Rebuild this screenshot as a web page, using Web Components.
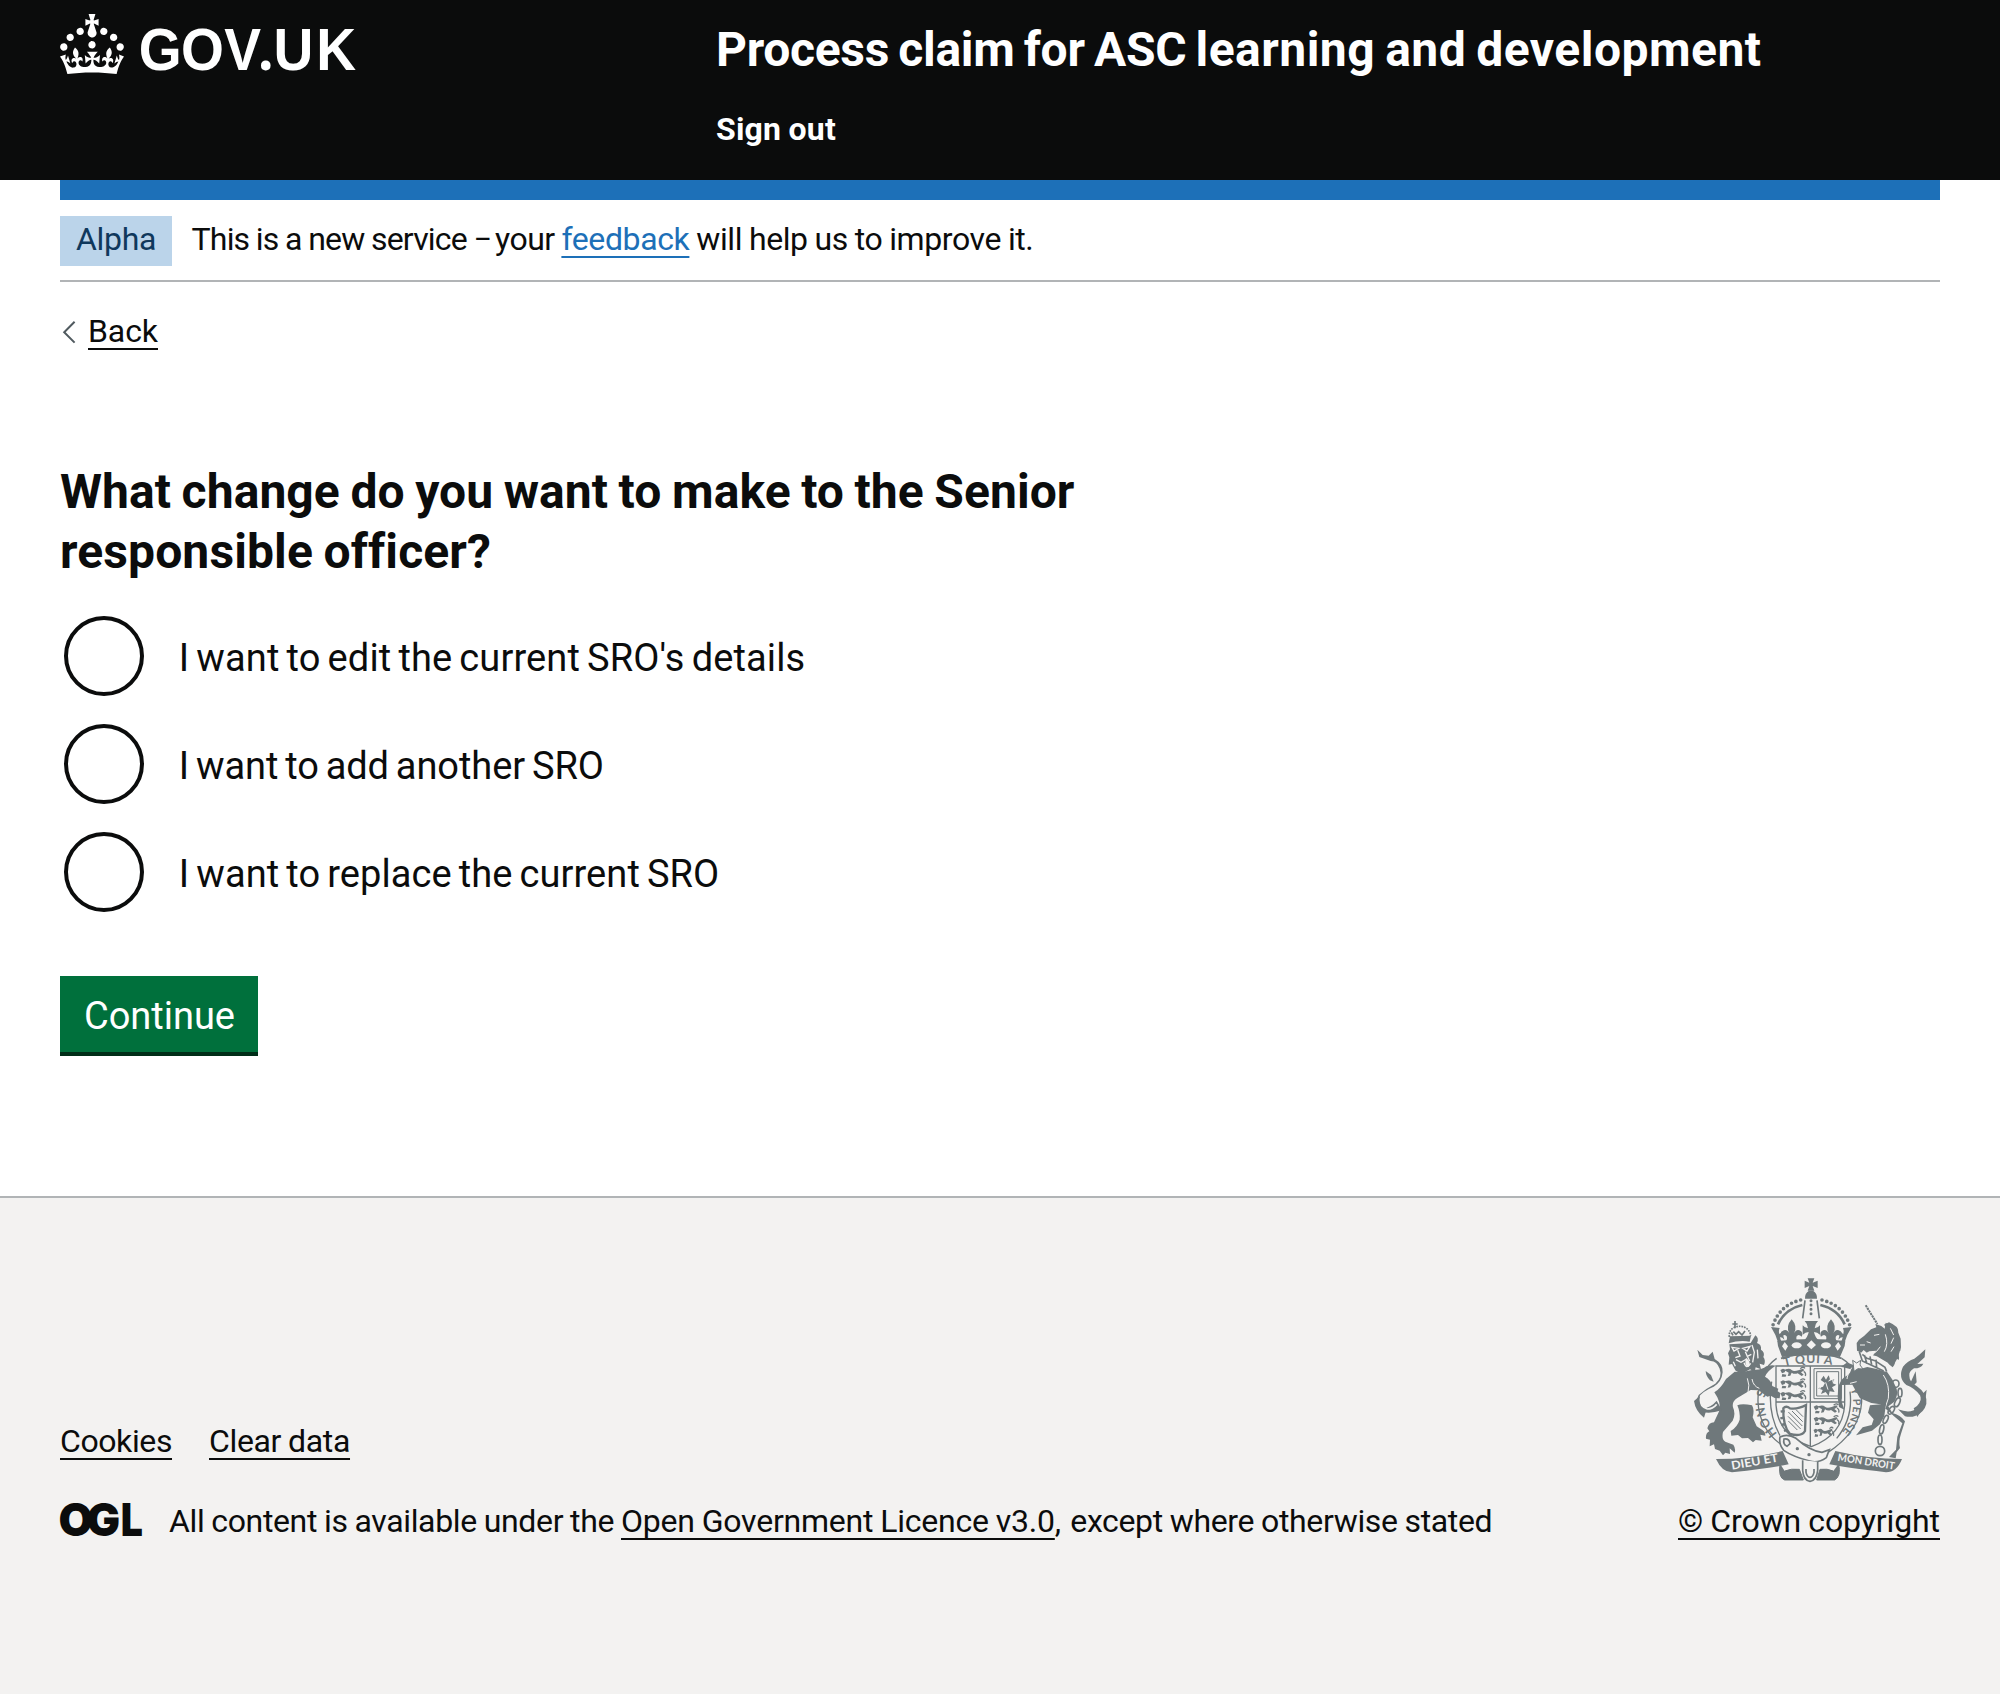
<!DOCTYPE html>
<html lang="en">
<head>
<meta charset="utf-8">
<title>What change do you want to make to the Senior responsible officer?</title>
<style>
  html, body { margin: 0; padding: 0; }
  body { background: #f3f2f1; color: #0b0c0c; font-family: Roboto, "Liberation Sans", sans-serif; font-size: 32px; line-height: 40px; }
</style>
</head>
<body>
<claim-page></claim-page>

<script>
const define = (name, html, extra) => {
  const template = document.createElement('template');
  template.innerHTML = html.trim();
  customElements.define(name, class extends HTMLElement {
    constructor() {
      super();
      this.attachShadow({ mode: 'open' }).append(template.content.cloneNode(true));
    }
    connectedCallback() { if (extra) extra(this); }
  });
};

/* A run of text tracked to a set advance width. */
define('text-run', `<style>
    :host { display: inline-block; white-space: pre; font-kerning: normal; word-spacing: var(--word-gap, -.02em); }
    :host([link]) span { text-decoration: underline; text-decoration-thickness: 2px; text-underline-offset: 6px; text-decoration-skip-ink: none; }
  </style><span><slot></slot></span>`,
  el => {
    const wanted = parseFloat(el.getAttribute('width'));
    if (!wanted) return;
    el.style.letterSpacing = '0px';
    el.style.fontVariantLigatures = 'none';
    const natural = el.getBoundingClientRect().width;
    el.style.letterSpacing = ((wanted - natural) / el.textContent.length) + 'px';
  });

define('govuk-logo', `
  <style>:host { display: block; } svg { display: block; overflow: visible; }</style>
  <svg width="300" height="64" viewBox="0 0 300 64" fill="#fff" role="img" aria-label="GOV.UK">
    <g transform="scale(2)"><path d="M22.6 10.4c-1 .4-2-.1-2.4-1-.4-.9.1-2 1-2.4.9-.4 2 .1 2.4 1s-.1 2-1 2.4m-5.9 6.7c-.9.4-2-.1-2.4-1-.4-.9.1-2 1-2.4.9-.4 2 .1 2.4 1s-.1 2-1 2.4m10.8-3.7c-1 .4-2-.1-2.4-1-.4-.9.1-2 1-2.4.9-.4 2 .1 2.4 1s0 2-1 2.4m3.3 4.8c-1 .4-2-.1-2.4-1-.4-.9.1-2 1-2.4.9-.4 2 .1 2.4 1s-.1 2-1 2.4M17 4.7l2.3 1.2V2.5l-2.3.7-.2-.2.9-3h-3.4l.9 3-.2.2c-.1.1-2.3-.7-2.3-.7v3.4L15 4.7c.1.1.1.2.2.2l-1.3 4c-.1.2-.1.4-.1.6 0 1.1.8 2 1.9 2.2h.7c1-.2 1.9-1.1 1.9-2.1 0-.2 0-.4-.1-.6l-1.3-4c-.1-.2 0-.2.1-.3m-7.6 5.7c.9.4 2-.1 2.4-1 .4-.9-.1-2-1-2.4-.9-.4-2 .1-2.4 1s0 2 1 2.4m-5 3c.9.4 2-.1 2.4-1 .4-.9-.1-2-1-2.4-.9-.4-2 .1-2.4 1s.1 2 1 2.4m-3.2 4.8c.9.4 2-.1 2.4-1 .4-.9-.1-2-1-2.4-.9-.4-2 .1-2.4 1s0 2 1 2.4m14.8 11c4.4 0 8.6.3 12.3.8 1.1-4.5 2.4-7 3.7-8.8l-2.5-.9c.2 1.3.3 1.9 0 2.7-.4-.4-.8-1.1-1.1-2.3l-1.2 4c.7-.5 1.3-.8 2-.9-1.1 2.5-2.6 3.1-3.5 3-1.1-.2-1.7-1.2-1.5-2.1.3-1.2 1.5-1.5 2.1-.1 1.1-2.3-.8-3-2-2.3 1.9-1.9 2.1-3.5.6-5.6-2.1 1.6-2.1 3.2-1.2 5.5-1.2-1.4-3.2-.6-2.5 1.6.9-1.4 2.1-.5 1.9.8-.2 1.1-1.7 2.1-3.5 1.9-2.7-.2-2.9-2.1-2.9-3.6.7-.1 1.9.5 2.9 1.9l.4-4.3c-1.1 1.1-2.1 1.4-3.2 1.4.4-1.2 2.1-3 2.1-3h-5.4s1.7 1.9 2.1 3c-1.1 0-2.1-.2-3.2-1.4l.4 4.3c1-1.4 2.2-2 2.9-1.9-.1 1.5-.2 3.4-2.9 3.6-1.9.2-3.4-.8-3.5-1.9-.2-1.3 1-2.2 1.9-.8.7-2.3-1.2-3-2.5-1.6.9-2.2.9-3.9-1.2-5.5-1.5 2-1.3 3.7.6 5.6-1.2-.7-3.1 0-2 2.3.6-1.4 1.8-1.1 2.1.1.2.9-.3 1.9-1.5 2.1-.9.2-2.4-.5-3.5-3 .6 0 1.2.3 2 .9l-1.2-4c-.3 1.1-.7 1.9-1.1 2.3-.3-.8-.2-1.4 0-2.7l-2.9.9C1.3 23 2.6 25.5 3.7 30c3.7-.5 7.9-.8 12.3-.8"/></g>
    <text transform="scale(.92 1)" y="55.6" x="85.6 131.6 178.6 215.2 232 278.6" font-family="Liberation Sans" font-weight="700" font-size="60">GOV<tspan font-family="Noto Sans">.</tspan>UK</text>
  </svg>`);

define('ogl-logo', `
  <style>:host { display: block; width: 82px; height: 34px; } svg { display: block; overflow: visible; }</style>
  <svg width="82" height="34" viewBox="0 0 82 34" fill="#0b0c0c" font-family="Inter" font-weight="900" font-size="45.5">
    <text y="33.8" x="-1.6 27" transform="scale(.98 1)">OG</text><text y="33.8" x="70.6" transform="scale(.86 1)">L</text>
  </svg>`);

define('site-header', `
  <style>
    :host { display: block; background: #0b0c0c; color: #fff; height: 180px; padding: 0 60px; font-weight: 700; }
    .row { display: flex; }
    govuk-logo { width: 656px; padding-top: 14px; }
    .service { display: flex; flex-direction: column; padding-top: 20px; gap: 29px; }
    .name { font-size: 48px; line-height: 60px; --word-gap: -.05em; }
  </style>
  <div class="row"><govuk-logo></govuk-logo>
    <div class="service">
      <div class="name"><text-run width="479.5">Process claim for ASC </text-run><text-run width="566">learning and development</text-run></div>
      <div><text-run width="120">Sign out</text-run></div>
    </div>
  </div>`);

define('phase-banner', `
  <style>
    :host { display: block; margin: 0 60px; border-top: 20px solid #1d70b8; border-bottom: 2px solid #b1b4b6; }
    .row { display: flex; align-items: center; height: 50px; padding: 16px 0 14px; gap: 19.5px; }
    .tag { background: #bbd4ea; color: #0f385c; padding: 3px 16px 7px; width: 80px; }
    .msg { padding-bottom: 4px; white-space: nowrap; display: flex; }
    .blue { color: #1d70b8; }
    .dash { width: 21.5px; transform: scaleX(.85); transform-origin: left; }
  </style>
  <div class="row"><div class="tag"><text-run width="80">Alpha</text-run></div>
  <div class="msg"><text-run width="282">This is a new service </text-run><text-run class="dash">– </text-run><text-run width="66.4">your </text-run><text-run class="blue" link width="128">feedback</text-run><text-run width="344"> will help us to improve it.</text-run></div></div>`);

define('back-link', `
  <style>:host { display: flex; } svg { display: block; margin-right: 10px; }</style>
  <svg width="18" height="40" viewBox="0 0 18 40"><path d="M14.6 10.8 4.2 21.2 14.6 31.6" fill="none" stroke="#505a5f" stroke-width="2"/></svg><text-run link width="70">Back</text-run>`);

define('radio-option', `
  <style>
    :host { display: flex; gap: 34.8px; height: 80px; font-size: 38px; line-height: 50px; --word-gap: -.065em; }
    .dot { width: 72px; height: 72px; border: 4px solid #0b0c0c; border-radius: 50%; background: #fff; }
    .label { padding-top: 17px; }
  </style><div class="dot"></div><div class="label"><slot></slot></div>`);

define('continue-button', `
  <style>
    :host { display: block; width: 174px; height: 61px; padding: 15px 0 0 24px; background: #00703c; color: #fff; border-bottom: 4px solid #002d18; font-size: 38px; line-height: 50px; }
  </style><text-run width="151">Continue</text-run>`);

define('royal-arms', `
  <style>:host { display: block; width: 262px; height: 206px; } svg { display: block; }</style>
  <svg width="262" height="206" viewBox="24 36 786 618" fill="#6f787b" stroke="none">
    <defs>
      <path id="garterL" d="M322 506C262 440 262 340 392 297"/>
      <path id="garterT" d="M336 308Q425 280 520 308"/>
      <path id="garterR" d="M541 372C566 440 540 510 430 556"/>
      <g id="passant">
        <path d="M2 8l8-4 8 3-3 8-8 3z M18 6q12-4 18 2t20 1l14-5 4 5-10 6 8 7-6 4-12-8q-10 4-18-2l-4 9-8 1 3-10-10-6z M8 20l12 2-2 6-12 0z"/>
        <path d="M62 4q8-8 14-1M72 12q8 4 5 14" fill="none" stroke="#6f787b" stroke-width="4"/>
      </g>
      <path id="fleur" d="M0-34q17 19 6 38 5-12 15-9 11 5 6 18-9-10-14-1-3 10 8 18h-42q11-8 8-18-5-9-14 1-5-13 6-18 10-3 15 9-11-19 6-38z"/>
      <path id="halfcross" d="M303 186l26 3q-4 10-1 18 5-2 8-9l7 26q-7-8-13-7 0 8 9 18h-14q-8-28-22-49z"/>
    </defs>

    <!-- crown -->
    <path d="M413 40h20l-5 13 15-6v22l-15-6 5 14h-20l5-14-14 6V47l14 6z"/>
    <path d="M417 77h12q13 8 12 24h-36q-1-16 12-24z"/>
    <path d="M405 106l-7 54M441 106l7 54" fill="none" stroke="#6f787b" stroke-width="5"/>
    <path d="M423 107v52" fill="none" stroke="#6f787b" stroke-width="9" stroke-linecap="round" stroke-dasharray="0 13"/>
    <path d="M392 105Q330 120 309 180M456 105Q518 120 539 180" fill="none" stroke="#6f787b" stroke-width="11" stroke-linecap="round" stroke-dasharray="0 14.5"/>
    <path d="M397 120Q345 132 324 178M451 120Q503 132 524 178" fill="none" stroke="#6f787b" stroke-width="8"/>
    <path d="M404 168h40q-10 10-10 22 10-1 16-9v28q-8-8-18-8 2 14 16 28h-48q14-14 16-28-10 0-18 8v-28q6 8 16 9 0-12-10-22z"/>
    <use href="#fleur" transform="translate(365 201) scale(1.12)"/><use href="#fleur" transform="translate(483 201) scale(-1.12 1.12)"/>
    <use href="#halfcross"/><use href="#halfcross" transform="translate(848 0) scale(-1 1)"/>
    <path d="M322 228q102-12 204 0l-2 15-14 33q-86-11-174 0l-12-33z"/>
    <g fill="#f3f2f1"><path d="M424 226l14 14-14 13-14-13zM344 231l10 13-8 13-10-13zM505 231l-10 13 8 13 10-13z"/><ellipse cx="380" cy="241" rx="15" ry="9"/><ellipse cx="468" cy="241" rx="15" ry="9"/></g>

    <!-- garter -->
    <path d="M320 280Q262 320 264 410 268 500 350 550M515 280Q574 315 575 410 570 500 470 565" fill="none" stroke="#6f787b" stroke-width="4"/>
    <path d="M333 280Q425 252 515 280" fill="none" stroke="#6f787b" stroke-width="5"/>
    <path d="M305 350Q290 440 330 512M540 380Q550 460 500 520" fill="none" stroke="#6f787b" stroke-width="4"/>
    <g font-family="Lato" font-weight="700" font-size="37" letter-spacing="2">
      <text><textPath href="#garterL">HONI SO</textPath></text>
      <text><textPath href="#garterT" startOffset="8">T QUI A</textPath></text>
      <text font-size="32"><textPath href="#garterR">Y PENSE</textPath></text>
    </g>

    <!-- shield -->
    <path d="M318 303H524V420Q518 510 424 545 324 512 318 420z" fill="#f3f2f1" stroke="#6f787b" stroke-width="4"/>
    <path d="M421 303V543M318 411H524" stroke="#6f787b" stroke-width="4"/>
    <use href="#passant" x="329" y="307"/><use href="#passant" x="329" y="342"/><use href="#passant" x="329" y="377"/>
    <use href="#passant" x="429" y="417"/><use href="#passant" x="429" y="452"/><use href="#passant" transform="translate(429 487) scale(.8 1)"/>
    <path d="M432 311H514V401H432zM440 320H506V393H440z" fill="none" stroke="#6f787b" stroke-width="3"/>
    <path d="M452 345l9-13 7 12 8-14 4 13-7 7 20-8-5 13 11 4-13 8 8 14-15-2-3 14-9-12-14 6 5-12-14-5 15-5 6-11z"/>
    <path d="M475 330q15 3 14 22M452 365l-4 10M467 352l7 22" fill="none" stroke="#f3f2f1" stroke-width="3"/>
    <path d="M340 430q8-9 20 0 22 4 48-10l-3 78q-10 18-45 9-22-25-20-77z" fill="none" stroke="#6f787b" stroke-width="7"/>
    <path d="M355 441l42 42M366 438l32 32M378 434l21 21M354 454l38 38M355 468l27 27" stroke="#6f787b" stroke-width="3"/>
    <path d="M332 440l12-2M331 460l12-2M334 480l12-3M342 498l10-4" stroke="#6f787b" stroke-width="7"/>

    <!-- lion -->
    <path d="M176 235q32-10 63-5l4-18-63 2z"/>
    <path d="M178 216q-2-22 16-29t32 1 16 24" fill="none" stroke="#6f787b" stroke-width="5" stroke-dasharray="5 3"/>
    <path d="M195 168v22M187 177h16M190 200l8 8 8-8 10 10 9-12M184 202l5 9" stroke="#6f787b" stroke-width="5" fill="none"/>
    <path d="M178 238l64-4 14-23q12 8 5 23 14 4 12 20 13 8 7 22 8 10 2 24l-13-4 4 17-16-6-3 13-14-7-25 14-18-10-11-20-10 2 2-22-4-12 6-12z"/>
    <path d="M186 247l20 3-14 8zM218 250l22-6-9 14zM203 256l7 17-14 5M226 260l6 14 12-6M198 284l15 8 17-10M222 293q8 22 20 2M246 240l7 22-5 30M262 254l2 26M190 290l6 14M233 276l6 12" fill="none" stroke="#f3f2f1" stroke-width="4"/>
    <path d="M228 278q18 14 8 28-15-4-8-28z" fill="#f3f2f1"/>
    <path d="M215 322l34-8q26 2 40-10 18-6 28-2-26 16-32 33 18 10 22 28l18 8-2 8 8 5-2 16-15-1-12-7-10 3-26-19-24-1-40 24q-17 10-13 28 9 20-1 40l-29 34q-5 22 7 29l24 9q8 12 4 24l-15-13 1 17-14-4-7 8-10-14-14-5-3-14-13 6 1-20-12-3q-2-16 10-22l-6-9q4-18 20-18l16-35q5-18-6-40l-9-15q18-10 35-40l26-22z"/>
    <path d="M232 340q8 20 2 42M246 342q4 22 22 28" fill="none" stroke="#f3f2f1" stroke-width="3"/>
    <path d="M202 421q14-7 44 0 8 14 2 36l12 27 16 10q11 6 10 18l-15-3 4 18-18-2-8 7-15-13-18 1-12-10-20 2-2-14q20-12 27-34 2-22-7-43z"/>
    <path d="M156 436q-38 12-60 4-26-22-10-50 22-20 50-34 22-20 13-45-8-22-27-23l-34-12-6-22 16 16 18 2 12-12 6 22q26 15 24 40-3 30-27 43-34 14-45 32-12 22 10 34 26-2 44-24z"/>
    <path d="M120 346q-12-12-13-28l16 12 8 20z"/>
    <path d="M90 392l-18 16q4 30 30 50l8-26q-26-10-20-40z"/>
    <path d="M92 400q-4 24 20 32 16 0 28-14" fill="none" stroke="#f3f2f1" stroke-width="5"/>

    <!-- unicorn -->
    <path d="M587 121l35 56" stroke="#6f787b" stroke-width="6" stroke-dasharray="7 2"/>
    <path d="M560 234l7-10 15-11 21-20 16-6-3-10 18 6 10 8 3-18 16 10 18 10 11 28 1 26-9 30-13 23-25-8-41-15 14-20-21 2-15 8-22-10z"/>
    <path d="M657 172q30 12 28 30l-12-6q20 20 16 33l-13-8q18 21 15 37l-14-9q14 25 9 36l-14-10q8 18-4 32l-20-16q14-40 10-70t-16-42z"/>
    <path d="M612 211l16-3M590 230l12 4M570 240h15M631 245q-10 18-28 24M646 208q10 30-3 52M661 190l10 20M671 218l-8 18M672 245l-9 15" stroke="#f3f2f1" stroke-width="3" fill="none"/>
    <path d="M575 262l16 14 26 6 30 18 10 15" stroke="#f3f2f1" stroke-width="18" fill="none"/>
    <path d="M577 268l14 12 24 7 30 20 5 13M568 260l9 28 26 12 38 18M583 270l8 26M600 274l5 25M618 284l2 24" stroke="#6f787b" stroke-width="5" fill="none"/>
    <path d="M529 294q25 4 41 18l22-6q30 5 60 16 18 22 28 50 5 17-7 38l-18 14 12 20q24 5 38 25l-12 37q-8 24-3 43l-10 13-3 18-20-4 21-22 4-39 15-40-25-21-17-16-24-20-27-4-34-14-23-41-31 1-1 50 8 24-16-8-4-30q0-46 18-58 21-10 22-25l-30-8z"/>
    <path d="M545 308q-14 24-14 34M560 350l-20 5M640 330q20 28 15 70l-10 30" stroke="#f3f2f1" stroke-width="3" fill="none"/>
    <path d="M600 421l48-5-5 37-13 25-24 19-48 14 20-24 27-7 6-17-17-20z"/>
    <path d="M550 300l-2-14 12 8 12-8-2 14 9 12-15-1-12 8z" fill="#f3f2f1" stroke="#6f787b" stroke-width="3"/>
    <path d="M684 433q38 14 58-4 20-20 8-38-16-22-41-31-26-22-10-55 14-18 34-24l15-12 18-16-2 24-22 20 18-1q-6 14-28 14-16 10-14 22 0 20 22 31 34 24 29 54-7 26-32 35-15 6-32 2z"/>
    <path d="M752 392l18-18q-3 48-28 82l-11-26q24-14 21-38zM721 354l16-35 3 33-13 14z"/>
    <g fill="none" stroke="#6f787b" stroke-width="5"><ellipse cx="677" cy="356" rx="10" ry="11"/><ellipse cx="690" cy="383" rx="6" ry="13"/><ellipse cx="682" cy="412" rx="7" ry="14" transform="rotate(25 682 412)"/><ellipse cx="664" cy="436" rx="7" ry="13" transform="rotate(35 664 436)"/><ellipse cx="647" cy="463" rx="6" ry="13" transform="rotate(25 647 463)"/><ellipse cx="635" cy="493" rx="6" ry="14" transform="rotate(12 635 493)"/><ellipse cx="630" cy="524" rx="6" ry="14"/><circle cx="630" cy="558" r="14"/></g>

    <!-- belt and scrolls -->
    <path d="M330 516q22-12 48 4 42 38 78 42l22-8-9 24q-25 18-50 10-50-13-78-32-15-18-11-40z" fill="#f3f2f1" stroke="#6f787b" stroke-width="5"/>
    <path d="M342 522q16-2 18 14l-9 8q-13-6-9-22z" fill="none" stroke="#6f787b" stroke-width="5"/>
    <circle cx="382" cy="551" r="5"/><circle cx="417" cy="569" r="5"/><circle cx="418" cy="602" r="5"/>
    <path d="M138 582q100 0 200-24l18 40q-50 10-170 24-30 0-48-40z"/>
    <path d="M696 582q-100 0-200-24l-18 40q50 10 170 24 32 0 48-40z"/>
    <path d="M330 596q-6 42 14 49h56l-12-32q-24-3-44 5M506 596q8 38-12 49h-54l10-32q22-3 40 5" stroke="#6f787b" stroke-width="3"/>
    <path d="M398 586v30q2 30 22 33 20-3 23-33v-26" fill="#f3f2f1" stroke="#6f787b" stroke-width="5"/>
    <path d="M408 612v10q3 14 12 15 9-1 12-15v-10" fill="none" stroke="#6f787b" stroke-width="5"/>
    <g fill="#f3f2f1" font-family="Lato" font-weight="700">
      <text transform="translate(186 614) rotate(-10)" font-size="35" textLength="142" lengthAdjust="spacingAndGlyphs">DIEU ET</text>
      <text transform="translate(502 587) rotate(9)" font-size="31" textLength="172" lengthAdjust="spacingAndGlyphs">MON DROIT</text>
    </g>
  </svg>`);

define('site-footer', `
  <style>
    :host { display: flex; box-sizing: border-box; justify-content: space-between; align-items: flex-end; background: #f3f2f1; border-top: 2px solid #b1b4b6; height: 498px; padding: 0 60px 153px; }
    .links { display: flex; gap: 37px; }
    .licence { display: flex; margin-top: 40px; white-space: nowrap; }
    ogl-logo { margin: 1px 27px 0 0; }
    royal-arms { margin-bottom: 18px; }
    .copyright { display: flex; }
  </style>
  <div>
    <div class="links"><text-run link width="112">Cookies</text-run><text-run link width="141">Clear data</text-run></div>
    <div class="licence"><ogl-logo></ogl-logo><text-run width="452">All content is available under the </text-run><text-run link width="433.8">Open Government Licence v3.0</text-run><text-run width="15.5">, </text-run><text-run width="422">except where otherwise stated</text-run></div>
  </div>
  <div><royal-arms></royal-arms><div class="copyright"><text-run link width="262">© Crown copyright</text-run></div></div>`);

define('claim-page', `
  <style>
    :host { display: block; background: #fff; }
    main { display: block; box-sizing: border-box; height: 914px; padding: 29px 60px 0; }
    h1 { margin: 111px 0 34px; font-size: 48px; line-height: 60px; font-weight: 700; --word-gap: -.03em; }
    h1 text-run { display: block; width: max-content; }
    .radios { display: flex; flex-direction: column; gap: 28px; padding-left: 4px; margin-bottom: 64px; }
  </style>
  <site-header></site-header>
  <phase-banner></phase-banner>
  <main>
    <back-link></back-link>
    <h1><text-run width="1014.5">What change do you want to make to the Senior</text-run><text-run width="431">responsible officer?</text-run></h1>
    <div class="radios">
      <radio-option><text-run width="626.5">I want to edit the current SRO's details</text-run></radio-option>
      <radio-option><text-run width="425">I want to add another SRO</text-run></radio-option>
      <radio-option><text-run width="540.5">I want to replace the current SRO</text-run></radio-option>
    </div>
    <continue-button></continue-button>
  </main>
  <site-footer></site-footer>`);
</script>
</body>
</html>
